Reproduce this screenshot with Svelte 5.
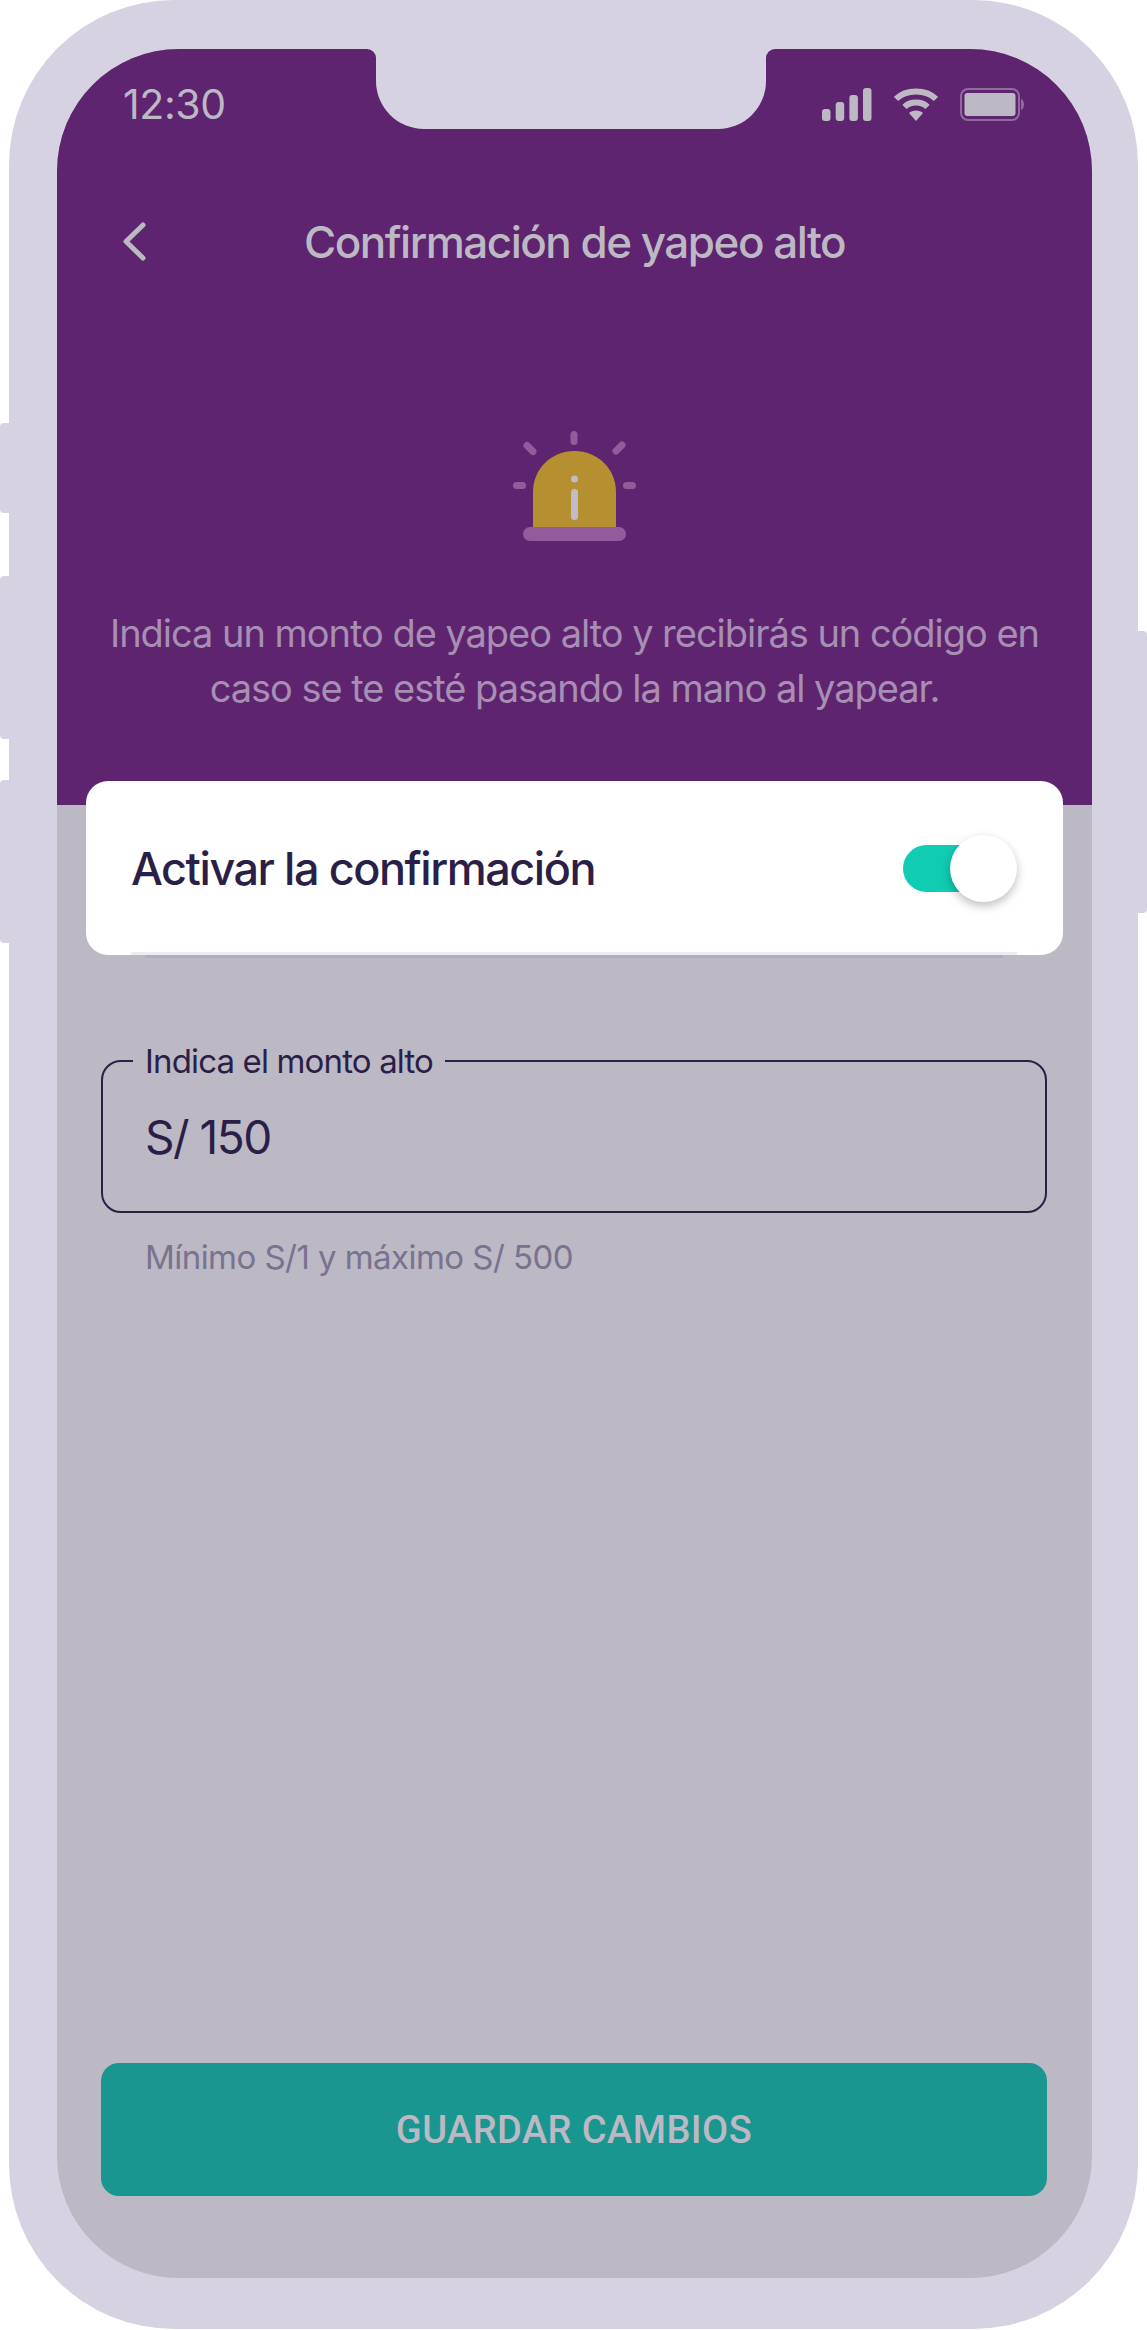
<script>
  let title = 'Confirmación de yapeo alto';
</script>

<div class="device">
  <span class="side side-a"></span>
  <span class="side side-b"></span>
  <span class="side side-c"></span>
  <span class="side side-d"></span>

  <div class="phone">
    <div class="screen">
      <div class="notch"></div>

      <header class="hero">
        <div class="statusbar">
          <span class="time">12:30</span>
          <div class="status-icons">
            <svg width="50" height="33" viewBox="0 0 50 33">
              <rect x="0" y="21" width="8.5" height="12" rx="3" />
              <rect x="13.7" y="14" width="8.5" height="19" rx="3" />
              <rect x="27.4" y="7" width="8.5" height="26" rx="3" />
              <rect x="41" y="0" width="8.5" height="33" rx="3" />
            </svg>
            <svg width="44" height="33" viewBox="0 0 44 33">
              <path d="M2 11 C12 1 32 1 42 11" class="wifi" />
              <path d="M10.5 19 C16 13 28 13 33.5 19" class="wifi" />
              <path d="M15 25 C18 21.5 26 21.5 29 25 L22 33 Z" />
            </svg>
            <svg width="66" height="33" viewBox="0 0 66 33">
              <rect x="1" y="1" width="58" height="31" rx="7" class="batt-border" />
              <rect x="4.5" y="5" width="51" height="23" rx="3" />
              <path d="M61 11 C65 12 65 21 61 22 Z" class="batt-tip" />
            </svg>
          </div>
        </div>

        <div class="navbar">
          <svg class="back" width="24" height="42" viewBox="0 0 24 42">
            <path d="M21 4 L4 20.5 L21 37" />
          </svg>
          <h1>{title}</h1>
        </div>

        <svg class="siren" width="140" height="130" viewBox="0 0 140 130">
          <g class="rays">
            <path d="M69 9.5 V16.5" />
            <path d="M22 20.5 L28 26.5" />
            <path d="M117 20 L111 26" />
            <path d="M11.5 60.5 H17.5" />
            <path d="M121.5 60.5 H127.5" />
          </g>
          <path class="dome" d="M28 102 V67 C28 44 46 26 69.5 26 C93 26 111 44 111 67 V102 Z" />
          <rect class="base" x="18" y="102" width="103" height="14" rx="7" />
          <circle class="i" cx="69.5" cy="54" r="3.5" />
          <rect class="i" x="66" y="64" width="7" height="31" rx="3.5" />
        </svg>

        <p class="intro">Indica un monto de yapeo alto y recibirás un código en caso se te esté pasando la mano al yapear.</p>
      </header>

      <div class="body">
        <div class="card">
          <span class="card-label">Activar la confirmación</span>
          <div class="toggle"><span class="thumb"></span></div>
          <span class="card-line"></span>
          <span class="card-shade"></span>
        </div>

        <fieldset class="field">
          <legend>Indica el monto alto</legend>
          <span class="value">S/ 150</span>
        </fieldset>
        <p class="hint">Mínimo S/1 y máximo S/ 500</p>

        <button class="save">GUARDAR CAMBIOS</button>
      </div>
    </div>
  </div>
</div>

<style>
:global(body) {
  margin: 0;
  background: #fff;
}

.device {
  position: relative;
  width: 1147px;
  height: 2330px;
  font-family: Inter, "Liberation Sans", sans-serif;
  overflow: hidden;
}

.side {
  position: absolute;
  width: 12px;
  background: #d6d2e2;
  border-radius: 4px;
}
.side-a { left: 0; top: 423px; height: 90px; }
.side-b { left: 0; top: 576px; height: 163px; }
.side-c { left: 0; top: 780px; height: 163px; }
.side-d { right: 0; top: 631px; height: 282px; }

.phone {
  position: relative;
  box-sizing: border-box;
  width: 1129px;
  height: 2329px;
  margin-left: 9px;
  padding: 49px 46px 51px 48px;
  background: #d6d2e2;
  border-radius: 165px;
}

.screen {
  position: relative;
  display: flex;
  flex-direction: column;
  height: 100%;
  background: #bcb8c4;
  border-radius: 122px;
  overflow: hidden;
}

.notch {
  position: absolute;
  top: 0;
  left: 319px;
  width: 390px;
  height: 80px;
  background: #d6d2e2;
  border-radius: 0 0 48px 48px;
}
.notch::before,
.notch::after {
  content: '';
  position: absolute;
  top: 0;
  width: 9px;
  height: 9px;
  background: #5e246f;
}
.notch::before {
  left: -9px;
  border-top-right-radius: 9px;
  box-shadow: 3px -3px 0 3px #d6d2e2;
}
.notch::after {
  right: -9px;
  border-top-left-radius: 9px;
  box-shadow: -3px -3px 0 3px #d6d2e2;
}

.hero {
  display: flex;
  flex-direction: column;
  align-items: center;
  flex: none;
  height: 756px;
  background: #5e246f;
}

.statusbar {
  display: flex;
  justify-content: space-between;
  align-items: center;
  align-self: stretch;
  height: 33px;
  margin-top: 39px;
  padding: 0 66px;
}
.time {
  margin-top: -2px;
  font-size: 41px;
  color: #bcb8c4;
  letter-spacing: -0.4px;
}
.status-icons {
  display: flex;
  gap: 22px;
}
.status-icons svg { fill: #bcb8c4; display: block; }
.wifi { fill: none; stroke: #bcb8c4; stroke-width: 6; }
.batt-border { fill: none; stroke: #8f6b9e; stroke-width: 2; }
.batt-tip { fill: #8f6b9e; }

.navbar {
  position: relative;
  align-self: stretch;
  display: flex;
  justify-content: center;
  align-items: center;
  height: 60px;
  margin-top: 91px;
}
.back {
  position: absolute;
  left: 65px;
  top: 9px;
  fill: none;
  stroke: #bcb8c4;
  stroke-width: 5;
  stroke-linecap: round;
  stroke-linejoin: round;
}
h1 {
  margin: 0;
  font-size: 44px;
  font-weight: 500;
  color: #bcb8c4;
  letter-spacing: -1.5px;
}

.siren {
  display: block;
  flex: none;
  margin-top: 153px;
}
.rays path { stroke: #925c9c; stroke-width: 7; stroke-linecap: round; fill: none; }
.dome { fill: #b58f30; }
.base { fill: #925c9c; }
.i { fill: #c0bcc8; }

.intro {
  width: 960px;
  margin: 51px 0 0;
  font-size: 38px;
  line-height: 55px;
  text-align: center;
  color: #a78fb3;
  letter-spacing: -1.03px;
}

.body {
  position: relative;
  flex: 1;
  display: flex;
  flex-direction: column;
  padding: 0 45px 82px 44px;
}

.card {
  position: relative;
  display: flex;
  align-items: center;
  justify-content: space-between;
  box-sizing: border-box;
  flex: none;
  height: 174px;
  margin: -24px -16px 0 -15px;
  padding: 0 46px 0 45px;
  background: #fff;
  border-radius: 22px;
}
.card-label {
  font-size: 45px;
  font-weight: 500;
  color: #2b1f47;
  letter-spacing: -1.45px;
}
.toggle {
  position: relative;
  width: 82px;
  height: 47px;
  margin-right: 32px;
  background: #10ccb2;
  border-radius: 24px;
}
.thumb {
  position: absolute;
  left: 47px;
  top: -10px;
  width: 67px;
  height: 67px;
  background: #fff;
  border-radius: 50%;
  box-shadow: 0 4px 10px rgba(0, 0, 0, 0.25);
}
.card-line {
  position: absolute;
  left: 45px;
  right: 46px;
  bottom: 0;
  height: 3px;
  background: #eeebf3;
}
.card-shade {
  position: absolute;
  left: 59px;
  right: 60px;
  bottom: -3px;
  height: 3px;
  background: #b2aebb;
}

.field {
  box-sizing: border-box;
  flex: none;
  height: 170px;
  margin: 88px 0 0;
  padding: 0;
  border: 2px solid #2b1f47;
  border-radius: 20px;
}
.field legend {
  padding: 0 12px;
  margin-left: 30px;
  font-size: 33px;
  line-height: 36px;
  color: #2b1f47;
  letter-spacing: -0.85px;
}
.value {
  display: block;
  margin: 30px 0 0 42px;
  font-size: 46px;
  color: #2b1f47;
  letter-spacing: -1.5px;
}

.hint {
  margin: 24px 0 0 44px;
  font-size: 33px;
  color: #797390;
  letter-spacing: -0.55px;
}

.save {
  margin-top: auto;
  height: 133px;
  flex: none;
  border: 0;
  border-radius: 18px;
  background: #1a9691;
  color: #bcb8c4;
  font-family: Roboto, sans-serif;
  font-size: 38px;
  font-weight: 500;
  letter-spacing: 0.45px;
}
</style>
